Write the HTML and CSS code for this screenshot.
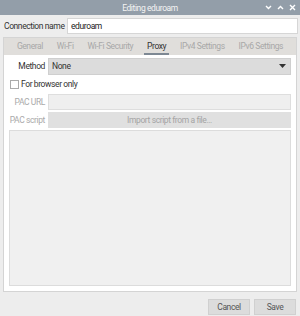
FILE: index.html
```html
<!DOCTYPE html>
<html lang="en">
<head>
    <meta charset="UTF-8">
    <title>Editing eduroam</title>
    <link rel="stylesheet" href="styles.css">
</head>
<body>
    <div class="window">
        <div class="titlebar">
            <span class="title">Editing eduroam</span>
            <div class="controls">
                <svg width="7" height="5" viewBox="0 0 7 5"><path d="M1 1 L3.5 3.5 L6 1" fill="none" stroke="#fff" stroke-width="1.4"/></svg>
                <svg width="7" height="5" viewBox="0 0 7 5"><path d="M1 4 L3.5 1.5 L6 4" fill="none" stroke="#fff" stroke-width="1.4"/></svg>
                <svg width="7" height="7" viewBox="0 0 7 7"><path d="M1 1 L6 6 M6 1 L1 6" fill="none" stroke="#fff" stroke-width="1.4"/></svg>
            </div>
        </div>

        <div class="name-row">
            <label class="name-label">Connection name</label>
            <input class="entry" type="text" value="eduroam">
        </div>

        <div class="notebook">
            <div class="tabs">
                <span class="tab">General</span>
                <span class="tab">Wi-Fi</span>
                <span class="tab">Wi-Fi Security</span>
                <span class="tab active">Proxy</span>
                <span class="tab">IPv4 Settings</span>
                <span class="tab">IPv6 Settings</span>
            </div>
            <div class="page">
                <div class="field">
                    <span class="field-label">Method</span>
                    <div class="combo">
                        <span>None</span>
                        <svg width="7" height="4" viewBox="0 0 7 4"><path d="M0 0 H7 L3.5 4 Z" fill="#333"/></svg>
                    </div>
                </div>
                <div class="check-row">
                    <span class="checkbox"></span>
                    <span>For browser only</span>
                </div>
                <div class="field">
                    <span class="field-label dim">PAC URL</span>
                    <div class="entry-off"></div>
                </div>
                <div class="field">
                    <span class="field-label dim">PAC script</span>
                    <div class="button-off">Import script from a file...</div>
                </div>
                <div class="script-box"></div>
            </div>
        </div>

        <div class="actions">
            <button class="btn">Cancel</button>
            <button class="btn">Save</button>
        </div>
    </div>
</body>
</html>
```

FILE: styles.css
```css
body {
    margin: 0;
    background-color: #ededed;
    font-family: Roboto, "Liberation Sans", sans-serif;
    font-size: 8.5px;
    letter-spacing: -0.4px;
    color: #333;
    white-space: nowrap;
}
.window {
    width: 300px;
    height: 316px;
    display: flex;
    flex-direction: column;
}
.titlebar {
    height: 15px;
    background-color: #939ea9;
    display: flex;
    align-items: center;
    justify-content: center;
    position: relative;
}
.title {
    color: #f4f4f4;
}
.controls {
    position: absolute;
    right: 4px;
    top: 4px;
    display: flex;
    gap: 5px;
    align-items: center;
}
.name-row {
    display: flex;
    align-items: center;
    padding: 3px 2px 0 4px;
    gap: 4px;
}
.name-label {
    width: 59px;
}
.entry {
    flex: 1;
    height: 14px;
    border: 1px solid #d6d6d6;
    background: #fff;
    padding: 0 3px;
    font: inherit;
    letter-spacing: inherit;
    color: #222;
    margin: 0;
    outline: none;
}
.notebook {
    margin: 3px 3px 0 3px;
    border: 1px solid #d4d4d4;
    height: 253px;
    display: flex;
    flex-direction: column;
}
.tabs {
    height: 17px;
    background-color: #e0dedb;
    display: flex;
    align-items: stretch;
    justify-content: space-evenly;
    padding: 0 2px;
}
.tab {
    color: #a8a8a8;
    display: flex;
    align-items: center;
    padding: 0 3px;
    border-bottom: 2px solid transparent;
}
.tab.active {
    color: #333;
    border-bottom-color: #7d8893;
}
.page {
    flex: 1;
    background: #fff;
    padding: 3px 5px 5px 5px;
    display: flex;
    flex-direction: column;
}
.field {
    display: flex;
    align-items: center;
    gap: 3px;
    height: 16px;
    margin-bottom: 2px;
}
.field-label {
    width: 36px;
    text-align: right;
}
.field-label.dim {
    color: #aaa;
}
.combo {
    flex: 1;
    height: 15px;
    background: #dcdcdc;
    border: 1px solid #cfcfcf;
    display: flex;
    align-items: center;
    justify-content: space-between;
    padding: 0 4px 0 3px;
    color: #333;
}
.check-row {
    display: flex;
    align-items: center;
    gap: 2px;
    height: 16px;
    margin-bottom: 2px;
    padding-left: 1px;
}
.checkbox {
    width: 7px;
    height: 7px;
    border: 1px solid #aaa;
    background: #fff;
}
.entry-off {
    flex: 1;
    height: 14px;
    background: #efefef;
    border: 1px solid #dedede;
}
.button-off {
    flex: 1;
    height: 16px;
    background: #e0e0e0;
    color: #a4a4a4;
    display: flex;
    align-items: center;
    justify-content: center;
}
.script-box {
    flex: 1;
    background: #f0f0f0;
    border: 1px solid #dcdcdc;
}
.actions {
    display: flex;
    justify-content: flex-end;
    gap: 4px;
    padding: 7px 4px 0 0;
}
.btn {
    width: 42px;
    height: 16px;
    background: #dcdcdc;
    border: 1px solid #d0d0d0;
    font: inherit;
    letter-spacing: inherit;
    color: #555;
    padding: 0;
}
```
